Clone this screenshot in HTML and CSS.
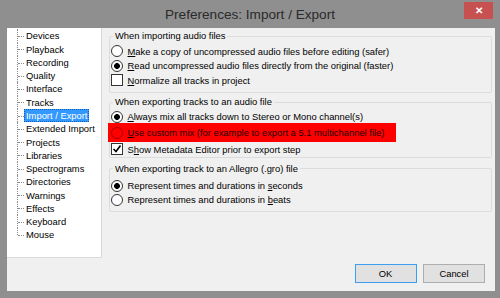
FILE: index.html
```html
<!DOCTYPE html>
<html>
  <head>
    <meta name="viewport" content="width=device-width,initial-scale=1.0">
    <title>Preferences: Import / Export</title>
    <link rel="stylesheet" href="styles.css">
  </head>
  <body>
    <div class="window">
      <div class="titlebar">
        <div class="title">Preferences: Import / Export</div>
        <div class="close">&#x2715;</div>
      </div>
      <div class="client">
        <div class="main">
          <div class="tree">
            <ul class="tree-list">
              <li><span>Devices</span></li>
              <li><span>Playback</span></li>
              <li><span>Recording</span></li>
              <li><span>Quality</span></li>
              <li><span>Interface</span></li>
              <li><span>Tracks</span></li>
              <li><span class="selected">Import / Export</span></li>
              <li><span>Extended Import</span></li>
              <li><span>Projects</span></li>
              <li><span>Libraries</span></li>
              <li><span>Spectrograms</span></li>
              <li><span>Directories</span></li>
              <li><span>Warnings</span></li>
              <li><span>Effects</span></li>
              <li><span>Keyboard</span></li>
              <li><span>Mouse</span></li>
            </ul>
          </div>
          <div class="page">
            <fieldset class="group group-import">
              <legend>When importing audio files</legend>
              <div class="option"><span class="radio"></span><span><u>M</u>ake a copy of uncompressed audio files before editing (safer)</span></div>
              <div class="option"><span class="radio checked"></span><span><u>R</u>ead uncompressed audio files directly from the original (faster)</span></div>
              <div class="option"><span class="check"></span><span><u>N</u>ormalize all tracks in project</span></div>
            </fieldset>
            <fieldset class="group group-export">
              <legend>When exporting tracks to an audio file</legend>
              <div class="option short"><span class="radio checked"></span><span><u>A</u>lways mix all tracks down to Stereo or Mono channel(s)</span></div>
              <div class="option marked"><span class="radio"></span><span><u>U</u>se custom mix (for example to export a 5.1 multichannel file)</span></div>
              <div class="option"><span class="check"><svg width="10" height="10" viewBox="0 0 10 10"><polyline points="1.5,5 4,7.5 8.5,1.5" fill="none" stroke="#000" stroke-width="1.6"/></svg></span><span>S<u>h</u>ow Metadata Editor prior to export step</span></div>
            </fieldset>
            <fieldset class="group group-allegro">
              <legend>When exporting track to an Allegro (.gro) file</legend>
              <div class="option"><span class="radio checked"></span><span>Represent times and durations in <u>s</u>econds</span></div>
              <div class="option"><span class="radio"></span><span>Represent times and durations in <u>b</u>eats</span></div>
            </fieldset>
          </div>
        </div>
        <div class="buttons">
          <div class="button default">OK</div>
          <div class="button">Cancel</div>
        </div>
      </div>
    </div>
  </body>
</html>
```

FILE: styles.css
```css
body { margin: 0; font-family: "Liberation Sans", Arial, sans-serif; font-size: 9.4px; color: #000; }

.window {
  width: 500px;
  height: 298px;
  box-sizing: border-box;
  padding: 0 5px 7px 7px;
  background: #8f8f8f;
  display: flex;
  flex-direction: column;
}

.titlebar { height: 28px; display: flex; align-items: flex-start; }
.title {
  flex: 1;
  padding-left: 29px;
  margin-top: 6px;
  line-height: 18px;
  text-align: center;
  font-size: 13.6px;
  color: #2a2a2a;
}
.close {
  width: 29px;
  height: 17px;
  margin-top: 2px;
  margin-right: 2px;
  background: #c75050;
  color: #fff;
  font-size: 10px;
  font-weight: bold;
  line-height: 17px;
  text-align: center;
}

.client { flex: 1; background: #f0f0f0; display: flex; flex-direction: column; }
.main { height: 230px; display: flex; }

/* tree on the left */
.tree {
  width: 95px;
  box-sizing: border-box;
  background: #fff;
  border-right: 1px solid #d9d9d9;
  border-bottom: 1px solid #d9d9d9;
  padding-top: 1.4px;
}
.tree-list { list-style: none; margin: 0 0 0 10px; padding: 0; }
.tree-list li { position: relative; padding-left: 7px; line-height: 13.27px; height: 13.27px; white-space: nowrap; }
.tree-list li::before {
  content: '';
  position: absolute;
  left: 0; top: 0; bottom: 0;
  border-left: 1px dotted #8a8a8a;
}
.tree-list li:last-child::before { bottom: 50%; }
.tree-list li::after {
  content: '';
  position: absolute;
  left: 1px; top: 50%; width: 6px;
  border-top: 1px dotted #8a8a8a;
}
.tree-list span { padding: 0 2px; display: inline-block; height: 13.27px; box-sizing: border-box; }
.tree-list .selected { background: #3399ff; color: #fff; outline: 1px dotted #0d5fb3; outline-offset: -1px; }

/* option groups */
.page { flex: 1; padding: 0 3px 0 7px; }
.group {
  margin: 0;
  padding: 0 0 0 1px;
  border: 1px solid #dcdcdc;
  border-radius: 2px;
}
.group legend { margin-left: 2px; padding: 0 2px; line-height: 12px; }
.group-import { margin-top: 2px; padding-top: 2px; padding-bottom: 4px; }
.group-export { margin-top: 3.5px; padding-top: 2px; padding-bottom: 0.5px; }
.group-allegro { margin-top: 5px; padding-top: 4px; padding-bottom: 4px; }

.option { display: flex; align-items: center; gap: 4.5px; height: 14.5px; white-space: nowrap; }
.group-export .option { height: 14px; }
.group-allegro .option { height: 14px; }
.group-export .option.short { height: 13px; }
.group-export .option.marked {
  height: 19px;
  width: 288px;
  box-sizing: border-box;
  margin-left: -3px;
  padding-left: 3px;
  background: #ff0000;
  color: #1a0000;
}

.radio {
  width: 12px;
  height: 12px;
  box-sizing: border-box;
  border: 1px solid #333;
  border-radius: 50%;
  background: #fff;
  flex: none;
}
.radio.checked { background: radial-gradient(circle, #000 2.6px, #fff 3.2px); }
.marked .radio { background: transparent; border-color: #a30000; }

.check {
  width: 12px;
  height: 12px;
  box-sizing: border-box;
  border: 1px solid #333;
  background: #fff;
  flex: none;
  display: flex;
  align-items: center;
  justify-content: center;
}

/* bottom buttons */
.buttons { display: flex; justify-content: flex-end; gap: 6.5px; padding: 6px 10px 8px 0; }
.button {
  width: 62px;
  height: 19px;
  box-sizing: border-box;
  border: 1px solid #adadad;
  background: #e1e1e1;
  line-height: 17px;
  text-align: center;
}
.button.default { border-color: #3c9ef0; }
```
